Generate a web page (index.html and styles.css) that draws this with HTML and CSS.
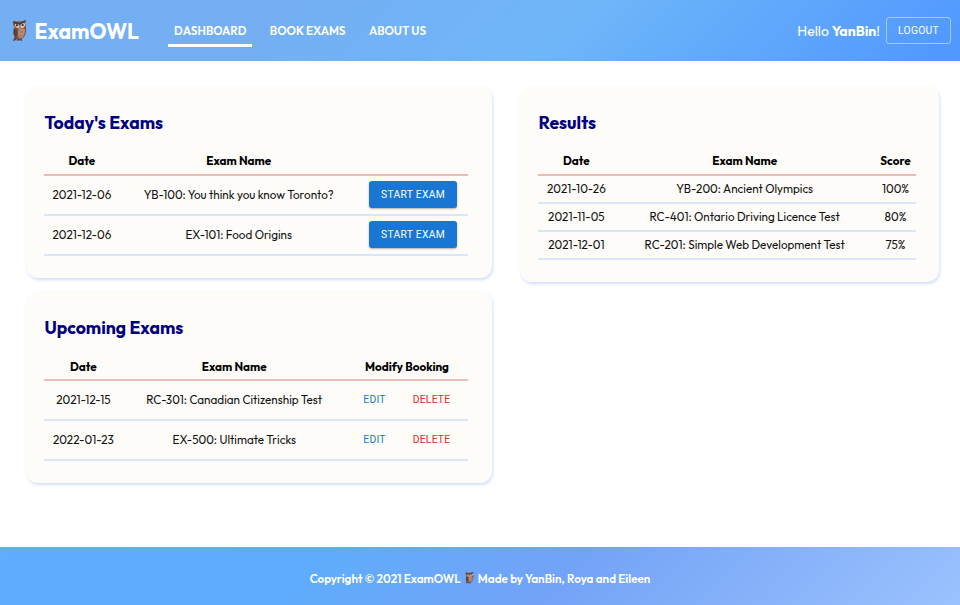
FILE: index.html
```html
<!DOCTYPE html>
<html lang="en">
<head>
<meta charset="utf-8">
<title>ExamOWL</title>
<link rel="stylesheet" href="styles.css">
</head>
<body>
<svg class="sprite" aria-hidden="true">
  <symbol id="owl" viewBox="0 0 16 24" preserveAspectRatio="none">
    <path d="M3 18l-2 5 3-1 2-2zM6 20l-1 3 3-1 3 1-1-3z" fill="#70402f"/>
    <path d="M1 1c3 1 9 1 14-1l-1 4 1 4c1 7-2 13-7 13-5-1-7-5-6-10l1-3-2-3z" fill="#805340"/>
    <path d="M7 10c3-1 6-1 7 0 0 5-2 10-6 10-2-2-2-6-1-10z" fill="#b38b78"/>
    <path d="M3 5c1-2 4-2 5 0 1-2 4-3 6-1 0 4-2 5-5 5-3 1-6-1-6-4z" fill="#dcc0b2"/>
    <path d="M1 1l7 2 7-3-2 3-4 2v2l-2-2-4-1z" fill="#5a3a32"/>
    <circle cx="5.3" cy="5.8" r="1.1" fill="#28252f"/><circle cx="11.4" cy="5.4" r="1.1" fill="#28252f"/>
    <path d="M7.5 7h2l-1 2z" fill="#4a3431"/>
    <path d="M2 9c4 2 5 6 2 10-3-2-3-6-2-10z" fill="#62402f"/>
    <path d="M9 12l1 2 2-2M8 16l1 2 2-2" fill="none" stroke="#94654f" stroke-width=".7"/>
  </symbol>
</svg>
<header class="topbar">
  <a class="brand"><svg class="brand-owl"><use href="#owl"/></svg><span class="brand-name">ExamOWL</span></a>
  <nav class="nav">
    <a class="nav-link active">DASHBOARD</a>
    <a class="nav-link">BOOK EXAMS</a>
    <a class="nav-link">ABOUT US</a>
  </nav>
  <div class="account">
    <span class="greeting">Hello <b>YanBin</b>!</span>
    <button class="logout">LOGOUT</button>
  </div>
</header>
<main class="dashboard">
  <div class="column">
    <section class="card">
      <h2>Today's Exams</h2>
      <table class="exams">
        <colgroup><col class="today-date"><col><col class="today-action"></colgroup>
        <thead><tr><th>Date</th><th>Exam Name</th><th></th></tr></thead>
        <tbody>
          <tr><td>2021-12-06</td><td>YB-100: You think you know Toronto?</td><td><button class="start">START EXAM</button></td></tr>
          <tr><td>2021-12-06</td><td>EX-101: Food Origins</td><td><button class="start">START EXAM</button></td></tr>
        </tbody>
      </table>
    </section>
    <section class="card">
      <h2>Upcoming Exams</h2>
      <table class="exams upcoming">
        <colgroup><col class="up-date"><col><col class="up-action"></colgroup>
        <thead><tr><th>Date</th><th>Exam Name</th><th>Modify Booking</th></tr></thead>
        <tbody>
          <tr><td>2021-12-15</td><td>RC-301: Canadian Citizenship Test</td><td><div class="actions"><button class="edit">EDIT</button><button class="delete">DELETE</button></div></td></tr>
          <tr><td>2022-01-23</td><td>EX-500: Ultimate Tricks</td><td><div class="actions"><button class="edit">EDIT</button><button class="delete">DELETE</button></div></td></tr>
        </tbody>
      </table>
    </section>
  </div>
  <section class="card results">
    <h2>Results</h2>
    <table>
      <colgroup><col class="res-date"><col><col class="res-score"></colgroup>
      <thead><tr><th>Date</th><th>Exam Name</th><th>Score</th></tr></thead>
      <tbody>
        <tr><td>2021-10-26</td><td>YB-200: Ancient Olympics</td><td>100%</td></tr>
        <tr><td>2021-11-05</td><td>RC-401: Ontario Driving Licence Test</td><td>80%</td></tr>
        <tr><td>2021-12-01</td><td>RC-201: Simple Web Development Test</td><td>75%</td></tr>
      </tbody>
    </table>
  </section>
</main>
<footer class="footer"><span>Copyright © 2021 ExamOWL</span><svg class="footer-owl"><use href="#owl"/></svg><span>Made by YanBin, Roya and Eileen</span></footer>
</body>
</html>
```
FILE: styles.css
```css
* { box-sizing: border-box; }
body {
  margin: 0;
  height: 605px;
  display: flex;
  flex-direction: column;
  overflow: hidden;
  background: #fff;
  color: #111;
  font-family: Outfit, Lato, "Open Sans", sans-serif;
  font-size: 11.7px;
}
.sprite { display: none; }
button { font-family: Roboto, sans-serif; font-weight: 400; padding: 0; border: 0; background: none; white-space: nowrap; }

.topbar {
  height: 61px;
  flex: none;
  display: flex;
  align-items: center;
  padding: 0 9px 0 12px;
  color: #fff;
  background: linear-gradient(135deg, #74aef3 0%, #74aef3 28%, #6fb6f9 58%, #5299ff 97%);
}
.brand { display: flex; align-items: center; width: 156px; }
.brand-owl { width: 15px; height: 22px; margin-right: 7.5px; }
.brand-name { font-size: 21.1px; line-height: 26px; font-weight: 700; white-space: nowrap; }
.nav { display: flex; gap: 11.4px; }
.nav-link {
  box-sizing: content-box;
  height: 30px;
  line-height: 33px;
  padding: 0 6px;
  font-weight: 600;
  font-size: 11.7px;
  white-space: nowrap;
  border-bottom: 3px solid transparent;
}
.nav-link.active { border-bottom-color: #fff; }
.account { margin-left: auto; display: flex; align-items: center; gap: 6px; }
.greeting { font-size: 14px; white-space: nowrap; }
.logout {
  width: 65px;
  height: 27px;
  font-size: 10.3px;
  letter-spacing: .3px;
  color: #fff;
  border: 1px solid #9dccff;
  border-radius: 3px;
}

.dashboard { flex: 1; display: flex; align-items: flex-start; justify-content: space-between; padding: 25px 21px 0 26px; }
.column { width: 466px; display: flex; flex-direction: column; gap: 13px; }
.card {
  height: 192px;
  padding: 24px 24px 0 18.4px;
  background: #fdfcf9;
  border-radius: 12px;
  box-shadow: 1px 2px 3px #d3e0fc;
}
.results { width: 419px; height: 196px; padding-left: 18.4px; padding-right: 23px; }
h2 { margin: 0 0 14px; font-size: 17.6px; line-height: 26px; font-weight: 700; color: #000080; white-space: nowrap; }
table { width: 100%; table-layout: fixed; border-collapse: separate; border-spacing: 0; text-align: center; }
th, td { padding: 0; white-space: nowrap; }
th { height: 26px; padding-bottom: 3px; font-weight: 700; color: #000; border-bottom: 2px solid #f3b8b5; }
td { height: 28px; padding-bottom: 1px; border-bottom: 2px solid #d9e5f9; }
.exams td { height: 40px; }
.upcoming th { padding-bottom: 2px; border-bottom-color: #eabfbb; }
.today-date { width: 75px; }
.today-action { width: 110px; }
.up-date { width: 78px; }
.up-action { width: 122px; }
.res-date { width: 76px; }
.res-score { width: 41px; }
.start {
  display: block;
  margin: 0 auto;
  width: 88px;
  height: 27px;
  color: #fff;
  font-size: 10.3px;
  letter-spacing: .3px;
  background: #1976d2;
  border-radius: 3px;
  box-shadow: 0 1px 2px rgba(0,0,0,.3);
}
.actions { display: flex; padding-left: 8px; }
.edit, .delete { height: 27px; font-size: 10.3px; letter-spacing: .25px; }
.edit { width: 44px; color: #1976d2; }
.delete { width: 78px; color: #d32f2f; }

.footer {
  height: 58px;
  flex: none;
  display: flex;
  align-items: center;
  justify-content: center;
  padding-top: 4px;
  color: #fff;
  font-weight: 600;
  white-space: nowrap;
  background: linear-gradient(135deg, #60acfd 0%, #60acfc 33%, #73a3f7 58%, #9bc2fd 100%);
}
.footer-owl { width: 9px; height: 12px; margin: 0 4px; }
```
